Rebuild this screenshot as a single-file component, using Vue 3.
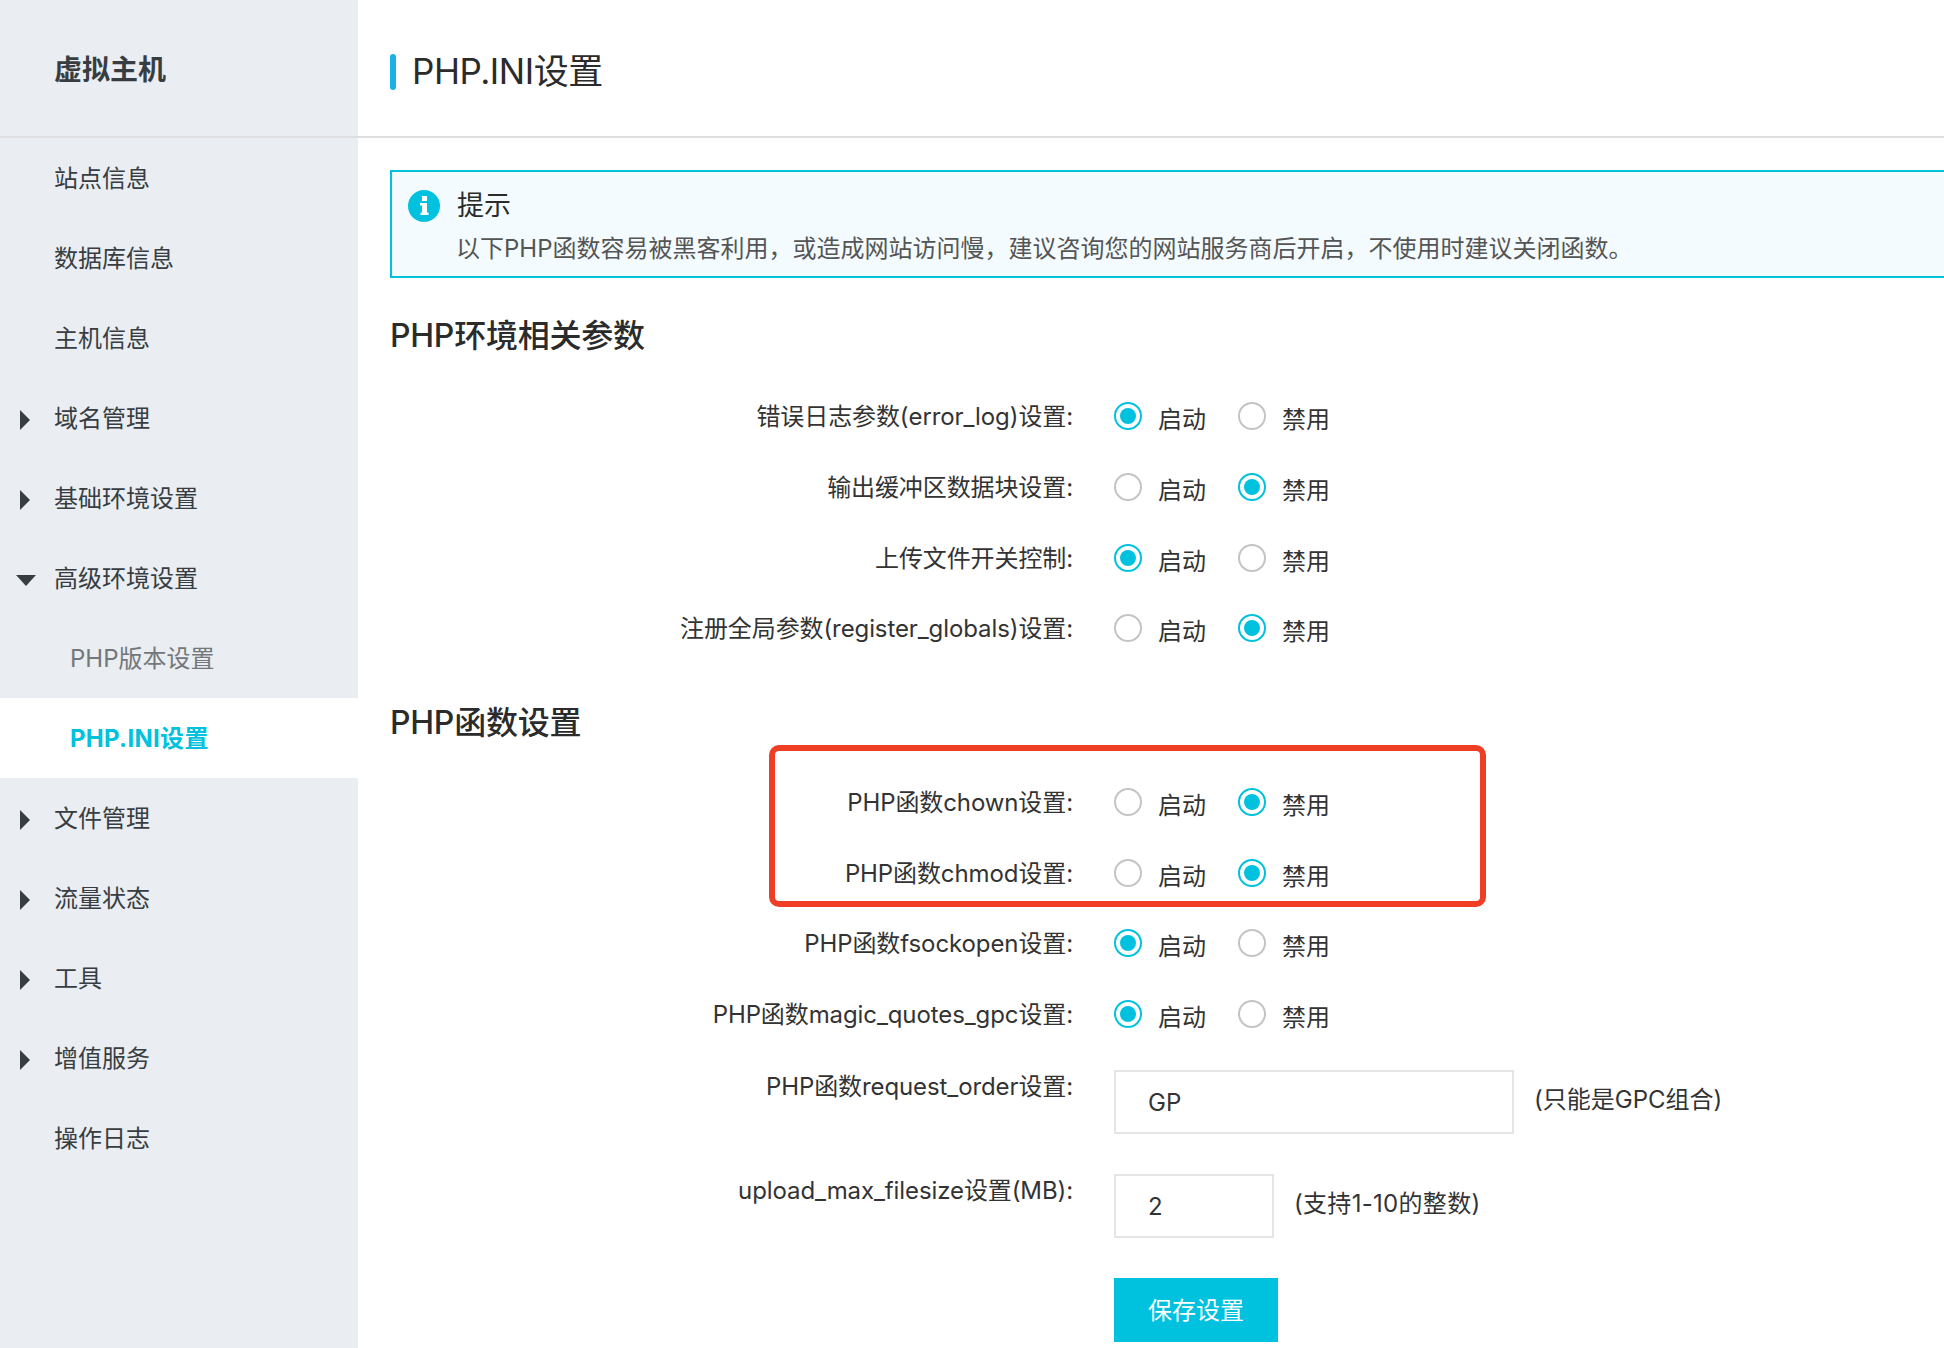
<script setup>
const menu = [
  { label: '站点信息' },
  { label: '数据库信息' },
  { label: '主机信息' },
  { label: '域名管理', arrow: 'right' },
  { label: '基础环境设置', arrow: 'right' },
  { label: '高级环境设置', arrow: 'down' },
  { label: 'PHP版本设置', sub: true },
  { label: 'PHP.INI设置', sub: true, active: true },
  { label: '文件管理', arrow: 'right' },
  { label: '流量状态', arrow: 'right' },
  { label: '工具', arrow: 'right' },
  { label: '增值服务', arrow: 'right' },
  { label: '操作日志' }
]
const envRows = [
  { label: '错误日志参数(error_log)设置:', on: true },
  { label: '输出缓冲区数据块设置:', on: false },
  { label: '上传文件开关控制:', on: true },
  { label: '注册全局参数(register_globals)设置:', on: false }
]
const boxedRows = [
  { label: 'PHP函数chown设置:', on: false },
  { label: 'PHP函数chmod设置:', on: false }
]
const fnRows = [
  { label: 'PHP函数fsockopen设置:', on: true },
  { label: 'PHP函数magic_quotes_gpc设置:', on: true }
]
const tip = '以下PHP函数容易被黑客利用\uFF0C或造成网站访问慢\uFF0C建议咨询您的网站服务商后开启\uFF0C不使用时建议关闭函数\u3002'
</script>

<template>
  <div class="page">
    <aside class="side">
      <div class="side-head"><span>虚拟主机</span></div>
      <ul class="menu">
        <li v-for="m in menu" :key="m.label" class="item" :class="{ sub: m.sub, active: m.active }">
          <svg v-if="m.arrow === 'right'" class="arrow" width="10" height="20" viewBox="0 0 10 20"><path d="M0 0L10 10L0 20Z" /></svg>
          <svg v-if="m.arrow === 'down'" class="arrow-down" width="20" height="11" viewBox="0 0 20 11"><path d="M0 0H20L10 11Z" /></svg>
          <span class="item-text">{{ m.label }}</span>
        </li>
      </ul>
    </aside>
    <main class="main">
      <header class="head">
        <i class="bar"></i>
        <h1>PHP.INI设置</h1>
      </header>
      <div class="content">
        <div class="alert">
          <svg class="info" width="32" height="32" viewBox="0 0 32 32">
            <circle cx="16" cy="16" r="16" fill="#00c1de" />
            <rect x="14" y="6" width="5" height="5" fill="#fff" />
            <path d="M12 13H19V22.5H20.5V25H12.5V22.5H14V15.5H12Z" fill="#fff" />
          </svg>
          <div class="alert-title">提示</div>
          <div class="alert-text">{{ tip }}</div>
        </div>

        <h2 class="sec sec-1">PHP环境相关参数</h2>
        <div v-for="r in envRows" :key="r.label" class="row">
          <label class="lab">{{ r.label }}</label>
          <span class="radio" :class="{ on: r.on }"></span><span class="opt">启动</span>
          <span class="radio r2" :class="{ on: !r.on }"></span><span class="opt">禁用</span>
        </div>

        <h2 class="sec sec-2">PHP函数设置</h2>
        <div class="boxed">
          <div v-for="r in boxedRows" :key="r.label" class="row">
            <label class="lab">{{ r.label }}</label>
            <span class="radio" :class="{ on: r.on }"></span><span class="opt">启动</span>
            <span class="radio r2" :class="{ on: !r.on }"></span><span class="opt">禁用</span>
          </div>
          <div class="redbox"></div>
        </div>
        <div v-for="r in fnRows" :key="r.label" class="row">
          <label class="lab">{{ r.label }}</label>
          <span class="radio" :class="{ on: r.on }"></span><span class="opt">启动</span>
          <span class="radio r2" :class="{ on: !r.on }"></span><span class="opt">禁用</span>
        </div>

        <div class="row-input first">
          <label class="lab">PHP函数request_order设置:</label>
          <div class="input wide">GP</div>
          <span class="hint">(只能是GPC组合)</span>
        </div>
        <div class="row-input second">
          <label class="lab">upload_max_filesize设置(MB):</label>
          <div class="input narrow">2</div>
          <span class="hint hint-num">(支持1-10的整数)</span>
        </div>
        <div class="actions">
          <button class="save" type="button">保存设置</button>
        </div>
      </div>
    </main>
  </div>
</template>

<style>
html, body { margin: 0; background: #fff; }
</style>

<style scoped>
* { box-sizing: border-box; }
.page {
  display: grid;
  grid-template-columns: 358px 1fr;
  width: 1944px;
  height: 1348px;
  overflow: hidden;
  font-family: Inter, "Noto Sans CJK SC", sans-serif;
  color: #333;
}
.side { background: #eaedf1; color: #373d41; }
.side-head {
  height: 138px;
  border-bottom: 2px solid #dfdfe1;
  padding: 0 0 1px 54px;
  display: flex;
  align-items: center;
  font-size: 28px;
  font-weight: 700;
}
.menu { list-style: none; margin: 0; padding: 0; }
.item {
  position: relative;
  height: 80px;
  display: flex;
  align-items: center;
  padding-left: 54px;
  font-size: 24px;
}
.item-text { padding-bottom: 4px; }
.item.sub { padding-left: 70px; color: #73777a; }
.item.active { background: #fff; color: #00c1de; font-weight: 700; letter-spacing: 0.3px; }
.arrow { position: absolute; left: 20px; top: 32px; fill: #373d41; }
.arrow-down { position: absolute; left: 16px; top: 37px; fill: #373d41; }
.main { min-width: 0; }
.head {
  height: 138px;
  border-bottom: 2px solid #dfdfe1;
  display: flex;
  align-items: center;
  padding-left: 32px;
}
.bar { width: 6px; height: 36px; border-radius: 3px; background: #1cb0e8; margin: 8px 16px 0 0; }
.head h1 { margin: 0; font-size: 35px; font-weight: 400; color: #2b2b2b; letter-spacing: -0.45px; }
.content { padding: 32px 0 0 32px; }
.alert {
  width: 1600px;
  height: 108px;
  border: 2px solid #00c1de;
  background: #f3fbfe;
  position: relative;
  padding: 14px 0 0 64px;
}
.info { position: absolute; left: 16px; top: 18px; }
.alert-title { font-size: 27px; line-height: 40px; color: #2b2b2b; padding-left: 1px; }
.alert-text { font-size: 24px; line-height: 40px; margin-top: 3px; color: #555; }
.sec { margin: 0; font-size: 32px; font-weight: 500; color: #2b2b2b; line-height: 50px; letter-spacing: -0.25px; }
.sec-1 { margin-top: 33px; margin-bottom: 20px; }
.sec-2 { margin-top: 34px; margin-bottom: 19px; }
.row {
  height: 70.7px;
  display: flex;
  align-items: center;
}
.lab {
  width: 683px;
  text-align: right;
  font-size: 24px;
  color: #333;
  white-space: nowrap;
  margin-right: 41px;
  padding-bottom: 3px;
  letter-spacing: -0.1px;
}
.radio {
  width: 28px;
  height: 28px;
  border-radius: 50%;
  border: 2px solid #c4c4c4;
  background: #fff;
  flex: none;
  position: relative;
  margin-right: 16px;
}
.radio.r2 { margin-left: 32px; margin-right: 16px; }
.radio.on { border-color: #00c1de; }
.radio.on::after {
  content: "";
  position: absolute;
  left: 4px;
  top: 4px;
  width: 16px;
  height: 16px;
  border-radius: 50%;
  background: #00c1de;
}
.opt { font-size: 24px; color: #333; margin-top: 3px; }
.boxed { position: relative; }
.redbox {
  position: absolute;
  left: 379px;
  top: -22px;
  width: 717px;
  height: 162px;
  border: 6px solid #ee3f26;
  border-radius: 10px;
  pointer-events: none;
}
.row-input { display: flex; align-items: flex-start; }
.row-input .lab { line-height: 34px; padding-bottom: 0; }
.row-input.first { margin-top: 20px; height: 104px; }
.row-input.second { height: 104px; }
.input {
  height: 64px;
  border: 2px solid #e5e5e5;
  background: #fff;
  font-size: 24px;
  line-height: 62px;
  padding-left: 32px;
  color: #333;
  flex: none;
}
.input.wide { width: 400px; }
.input.narrow { width: 160px; }
.hint { font-size: 24px; margin-left: 20px; margin-top: 10px; color: #333; }
.hint-num { letter-spacing: 0.3px; }
.actions { padding-left: 724px; }
.save {
  display: block;
  width: 164px;
  height: 64px;
  border: 0;
  background: #00c1de;
  color: #fff;
  font: inherit;
  font-size: 24px;
  padding: 0 0 2px;
}
</style>
